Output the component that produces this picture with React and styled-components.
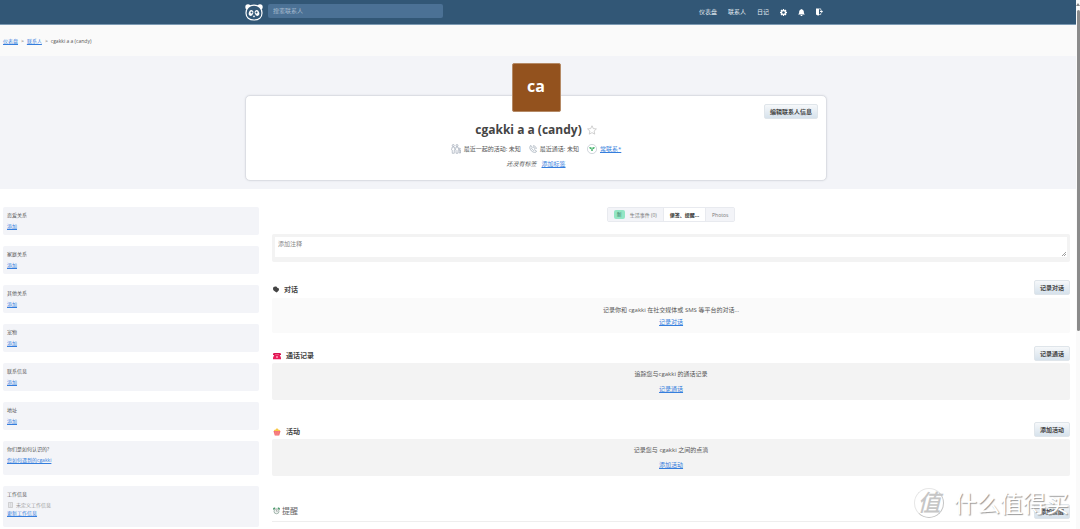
import React from "react";
import styled, { createGlobalStyle } from "styled-components";

const GlobalStyle = createGlobalStyle`
  *, *::before, *::after { box-sizing: border-box; }
  html, body { margin: 0; background: #fff; }
  body {
    color: #555;
    font: 6px/8px "Open Sans", "Noto Sans CJK SC", sans-serif;
    overflow: hidden;
  }
  h1, h2, h3, p, ul, ol { margin: 0; padding: 0; font-weight: 400; }
  ul, ol { list-style: none; }
  button, input, textarea { font-family: inherit; margin: 0; }
  svg { display: block; flex: none; }
`;

const Shell = styled.div`
  display: grid;
  grid-template-columns: minmax(0, 1fr) 4px;
  height: 100vh;
  overflow: hidden;
`;

const Page = styled.div`
  min-width: 0;
`;

const Scrollbar = styled.div`
  display: flex;
  flex-direction: column;
  align-items: flex-end;
  padding-top: 3px;
  background: #fafafa;
`;

const ScrollArrow = styled.span`
  border: 2px solid transparent;
  border-top: 0;
  border-bottom: 3px solid #858585;
  width: 3px;
  margin-bottom: 4px;
`;

const ScrollThumb = styled.span`
  width: 3px;
  height: 61%;
  border-radius: 2px;
  background: #8b8b8b;
`;

const Container = styled.div`
  max-width: 582px;
  margin: 0 auto;
`;

const TopBar = styled.header`
  height: 25px;
  padding: 0 7px 0 3px;
  background: #325776;
  border-bottom: 1px solid #7c9ab3;
`;

const TopBarRow = styled(Container)`
  display: flex;
  align-items: center;
  height: 24px;
`;

const LogoLink = styled.a`
  margin-right: 5px;
`;

const SearchInput = styled.input`
  width: 175px;
  height: 14px;
  margin-bottom: 2px;
  padding: 0 5px;
  border: 0;
  border-radius: 2px;
  background: #4b7195;
  color: #fff;
  font-size: 6px;
  &::placeholder { color: #a5bbce; opacity: 1; }
`;

const Nav = styled.nav`
  display: flex;
  align-items: center;
  gap: 11px;
  margin-left: auto;
  padding-right: 4px;
`;

const NavLink = styled.a`
  color: #e6edf3;
  text-decoration: none;
`;

const Crumbs = styled.nav`
  height: 31px;
  padding: 12px 3px 0;
  background: #fafafa;
  font-size: 5px;
  ol { display: flex; gap: 3px; }
`;

const Link = styled.a`
  color: #357edd;
  text-decoration: underline;
  font-size: ${(p) => (p.$small ? 5 : 6)}px;
`;

const Hero = styled.section`
  padding: 39px 7px 8px 3px;
  background: #f3f4f8;
`;

const ContactCard = styled(Container)`
  display: grid;
  grid-template-columns: 1fr auto 1fr;
  height: 86px;
  padding: 0 8px;
  background: #fff;
  border: 1px solid #dcdee4;
  border-radius: 5px;
  box-shadow: 0 0 2px #dcdee4;
`;

const Identity = styled.div`
  grid-column: 2;
  display: flex;
  flex-direction: column;
  align-items: center;
`;

const Avatar = styled.div`
  width: 49px;
  height: 49px;
  margin-top: -33px;
  border: 1px solid #b58a66;
  border-radius: 2px;
  background: #93521e;
  color: #fff;
  font-size: 16px;
  font-weight: 700;
  line-height: 45px;
  text-align: center;
`;

const Name = styled.h1`
  display: flex;
  align-items: center;
  gap: 5px;
  margin-top: 10px;
  color: #444;
  font-size: 12px;
  font-weight: 700;
  line-height: 16px;
`;

const StarButton = styled.button`
  padding: 0;
  border: 0;
  background: none;
`;

const Stats = styled.ul`
  display: flex;
  gap: 8px;
  margin-top: 6px;
  height: 10px;
  white-space: nowrap;
  li { display: flex; align-items: center; gap: 3px; }
`;

const Tags = styled.p`
  display: flex;
  gap: 5px;
  margin-top: 6px;
`;

const Button = styled.button`
  height: 15px;
  padding: 0 5px;
  border: 1px solid #dfe5ea;
  border-radius: 2px;
  background: linear-gradient(#f6f8fa, #d6e2ec);
  color: #444;
  font-size: 6px;
  font-weight: 700;
  line-height: 8px;
  white-space: nowrap;
`;

const EditButton = styled(Button)`
  justify-self: end;
  margin-top: 8px;
`;

const Columns = styled.div`
  display: grid;
  grid-template-columns: 24% minmax(0, 1fr);
  gap: 13px;
  padding: 18px 6px 0 3px;
`;

const Sidebar = styled.aside`
  display: flex;
  flex-direction: column;
  gap: 11px;
  font-size: 5px;
`;

const InfoCard = styled.section`
  padding: 4px 4px ${(p) => p.$bottom || 5}px;
  border-radius: 2px;
  background: #f3f4f8;
  display: flex;
  flex-direction: column;
  align-items: flex-start;
`;

const InfoTitle = styled.h3`
  margin-bottom: 3px;
  font-size: 5px;
`;

const Muted = styled.p`
  display: flex;
  align-items: center;
  gap: 3px;
  padding-left: 1px;
  color: #999;
`;

const Main = styled.main`
  min-width: 0;
`;

const Tabs = styled.div`
  display: flex;
  width: max-content;
  height: 15px;
  margin: 0 auto;
  border: 1px solid #e8eaef;
  border-radius: 2px;
`;

const Tab = styled.button`
  display: flex;
  align-items: center;
  gap: 5px;
  padding: 0 6px;
  border: 0;
  border-left: 1px solid #e8eaef;
  background: ${(p) => (p.$active ? "#fff" : "#f3f4f8")};
  color: ${(p) => (p.$active ? "#333" : "#777")};
  font-size: 5px;
  font-weight: ${(p) => (p.$active ? 700 : 400)};
  line-height: 8px;
  &:first-child { border-left: 0; }
`;

const Badge = styled.span`
  padding: 0 3px;
  border-radius: 2px;
  background: #93e6c4;
  color: #35765b;
  line-height: 9px;
`;

const NoteBox = styled.div`
  display: flex;
  height: 28px;
  margin-top: 12px;
  padding: 3px 3px 5px;
  border-radius: 2px;
  background: #f3f3f3;
`;

const NoteInput = styled.textarea`
  flex: 1;
  display: block;
  padding: 3px;
  border: 0;
  background: #fff;
  font-size: 6px;
  line-height: 8px;
  resize: none;
  &::placeholder { color: #888; opacity: 1; }
`;

const NoteGrip = styled.span`
  display: flex;
  align-items: flex-end;
  padding: 0 1px 1px 0;
  background: #fff;
`;

const Section = styled.section`
  margin-top: ${(p) => p.$space}px;
`;

const SectionHead = styled.div`
  display: flex;
  align-items: flex-end;
  justify-content: space-between;
  padding-bottom: ${(p) => p.$gap}px;
  border-bottom: ${(p) => (p.$ruled ? "1px solid #eee" : 0)};
`;

const SectionTitle = styled.h2`
  display: flex;
  align-items: center;
  gap: ${(p) => (p.$light ? 2 : 5)}px;
  padding-left: 1px;
  color: ${(p) => (p.$light ? "#666" : "#444")};
  font-size: ${(p) => (p.$light ? 8 : 7)}px;
  font-weight: ${(p) => (p.$light ? 400 : 700)};
  line-height: ${(p) => (p.$light ? 16 : 11)}px;
`;

const Panel = styled.div`
  display: flex;
  flex-direction: column;
  align-items: center;
  gap: ${(p) => (p.$pale ? 4 : 7)}px;
  padding: ${(p) => (p.$pale ? 8 : 7)}px 0 7px;
  border-radius: 2px;
  background: ${(p) => (p.$pale ? "#fafafa" : "#f3f3f3")};
`;

const Watermark = styled.div`
  position: absolute;
  right: 11px;
  bottom: 11px;
  display: flex;
  align-items: center;
  gap: 10px;
  color: #fff;
  font-size: 23px;
  line-height: 30px;
  text-shadow: 1px 1px 1px #999;
  pointer-events: none;
`;

const WatermarkSeal = styled.span`
  width: 30px;
  height: 30px;
  border: 1px solid #e6e6e6;
  border-right-color: #c4c4c4;
  border-bottom-color: #c4c4c4;
  border-radius: 50%;
  color: #c6c6c6;
  font-style: italic;
  font-weight: 500;
  line-height: 26px;
  text-align: center;
  text-shadow: none;
`;

const PandaLogo = () => (
  <svg width="18" height="17" viewBox="0 0 18 17" aria-label="Monica">
    <circle cx="3" cy="3" r="2.7" fill="#fff" />
    <circle cx="15" cy="3" r="2.7" fill="#fff" />
    <path d="M9 1.2C13.6 1.2 17 4.2 17 9.1c0 4.4-3.3 6.9-8 6.9s-8-2.500-8-6.9C1 4.200 4.400 1.200 9 1.200Z" fill="#325776" stroke="#fff" strokeWidth="1.2" />
    <ellipse cx="6" cy="9" rx="2.200" ry="2.900" fill="#fff" transform="rotate(20 6 9)" />
    <ellipse cx="12" cy="9" rx="2.200" ry="2.900" fill="#fff" transform="rotate(-20 12 9)" />
    <circle cx="6.500" cy="8.600" r="1" fill="#325776" />
    <circle cx="11.500" cy="8.600" r="1" fill="#325776" />
    <path d="M7.600 11.800h2.800L9 13.600Z" fill="#fff" />
  </svg>
);

const GearIcon = () => (
  <svg width="7" height="7" viewBox="0 0 14 14">
    <path d="M7 0v14M0 7h14M2 2l10 10M12 2 2 12" stroke="#fff" strokeWidth="2.600" />
    <circle cx="7" cy="7" r="5" fill="#fff" />
    <circle cx="7" cy="7" r="2.600" fill="#325776" />
  </svg>
);

const BellIcon = () => (
  <svg width="7" height="7" viewBox="0 0 14 14">
    <path d="M7 0c.8 0 1 .6 1 1.200 2.500.5 3.700 2.500 3.700 5 0 2.600.8 3.700 2.100 4.900H.2C1.500 9.900 2.300 8.800 2.300 6.200c0-2.500 1.200-4.500 3.700-5C6 .6 6.200 0 7 0ZM5 12h4c0 2.600-4 2.600-4 0Z" fill="#fff" />
  </svg>
);

const LogoutIcon = () => (
  <svg width="7" height="8" viewBox="0 0 14 16">
    <path d="M0 1h4.500L6 2v12l-1.500 1.500L0 13Z" fill="#fff" />
    <path d="M5 1.700h4.500V5M9.500 10v3H6" fill="none" stroke="#fff" strokeWidth="1.300" />
    <path d="M8 6.200h2.500V4L14 7.200l-3.500 3.200V8.200H8Z" fill="#fff" />
  </svg>
);

const StarIcon = () => (
  <svg width="10" height="10" viewBox="0 0 20 20">
    <path d="m10 1.500 2.600 5.700 6.200.7-4.600 4.200 1.300 6.200L10 15.200l-5.500 3.100 1.300-6.200L1.200 7.900l6.200-.7Z" fill="none" stroke="#c4c4c4" strokeWidth="1.600" />
  </svg>
);

const PeopleIcon = () => (
  <svg width="10" height="10" viewBox="0 0 20 20" fill="none" stroke="#93a0ae" strokeWidth="1.200">
    <circle cx="4.500" cy="3" r="2" />
    <path d="M2.500 6h4L8 11.500l-1.500 1v6h-4v-6L1 11.500Z" />
    <circle cx="12" cy="3" r="2" />
    <path d="M10 6h4l1.500 5.500-1.500 1v6h-4v-6l-1-1Z" />
    <circle cx="17.500" cy="9.500" r="1.200" />
    <path d="M16.500 12h2.500v6h-2.500Z" />
  </svg>
);

const CallIcon = () => (
  <svg width="8" height="8" viewBox="0 0 16 16" fill="none" stroke="#8795a5" strokeWidth="1.200">
    <path d="M2 2.500 4 1l2.500 3.500L5 6.200c.5 2 2.500 4 4.500 4.800l1.700-1.500L15 12l-1.500 2.500C7 16 0 9 2 2.500Z" />
    <path d="M8 1.500c4 0 6.500 2.500 6.500 6.500M8 4.200c2.300 0 3.800 1.500 3.800 3.800" />
  </svg>
);

const TouchIcon = () => (
  <svg width="10" height="10" viewBox="0 0 20 20">
    <circle cx="10" cy="10" r="9.200" fill="#fff" stroke="#b4bcc6" strokeWidth="1.200" />
    <path d="M4.500 6 8 6.500l2 1.500 2-1.500 3.500-.5-1 3.500-3 1V14H8.500v-3.500l-3-1Z" fill="#45b36b" />
    <circle cx="10" cy="9.500" r="1.200" fill="#fff" />
  </svg>
);

const JobIcon = () => (
  <svg width="5" height="6" viewBox="0 0 10 12" fill="none" stroke="#aaa">
    <path d="M1 1h8v10H1ZM3 3.500h4M3 6h4M3 8.500h4" />
  </svg>
);

const SpeechIcon = () => (
  <svg width="6" height="7" viewBox="0 0 12 14">
    <path d="M0 5.500C0 2.500 2 1 4.500 1 7 1 8 2 8.500 3.500 10.800 3.500 12 5 12 7.200c0 1.600-.8 2.600-2 3.200L7.500 13 5.500 12 2 9.500C.7 8.700 0 7.500 0 5.500Z" fill="#444" />
  </svg>
);

const PhoneIcon = () => (
  <svg width="8" height="8" viewBox="0 0 16 16">
    <path d="M0 6V4q0-2 3-2h10q3 0 3 2v2h-4V5H4v1Z" fill="#d8114f" />
    <path d="M3 5h10l3 6v3.500H0V11Z" fill="#e91e5b" />
    <circle cx="8" cy="10" r="2" fill="#ff9fb8" />
  </svg>
);

const PopcornIcon = () => (
  <svg width="8" height="8" viewBox="0 0 16 16">
    <path d="M2 7c-1-3 2-4 3-3 0-4 6-4 6 0 2-1 4 1 3 3Z" fill="#f9c846" />
    <path d="M1 6h14l-2.500 9h-9Z" fill="#f47174" />
    <path d="M5 7h1.500l.3 8H5.500ZM9.500 7H11l-.7 8H9Z" fill="#f99a9a" />
  </svg>
);

const ClockIcon = () => (
  <svg width="7" height="8" viewBox="0 0 14 16">
    <path d="M0 4c0-3 4-4 5-2L1.500 6ZM14 4c0-3-4-4-5-2l3.500 4Z" fill="#3f9563" />
    <circle cx="7" cy="8.500" r="5" fill="#eef2f0" stroke="#8aa095" strokeWidth="1.500" />
    <path d="M7 5v3.500h2.500" stroke="#777" fill="none" />
  </svg>
);

const GripIcon = () => (
  <svg width="4" height="4" viewBox="0 0 4 4" stroke="#777">
    <path d="M0 4 4 0M2 4l2-2" strokeWidth="0.700" />
  </svg>
);

const RELATIONS = ["恋爱关系", "家庭关系", "其他关系", "宠物", "联系信息", "地址"];

const ACTIVITY_SECTIONS = [
  { title: "对话", icon: <SpeechIcon />, action: "记录对话", text: "记录你和 cgakki 在社交媒体或 SMS 等平台的对话...", space: 18, gap: 3, pale: true },
  { title: "通话记录", icon: <PhoneIcon />, action: "记录通话", text: "追踪您与cgakki 的通话记录", space: 13, gap: 2 },
  { title: "活动", icon: <PopcornIcon />, action: "添加活动", text: "记录您与 cgakki 之间的点滴", space: 22, gap: 2 },
];

export default function App() {
  return (
    <Shell>
      <GlobalStyle />
      <Page>
        <TopBar>
          <TopBarRow>
            <LogoLink href="#"><PandaLogo /></LogoLink>
            <SearchInput type="search" placeholder="搜索联系人" aria-label="搜索联系人" />
            <Nav>
              <NavLink href="#">仪表盘</NavLink>
              <NavLink href="#">联系人</NavLink>
              <NavLink href="#">日记</NavLink>
              <NavLink href="#" aria-label="设置"><GearIcon /></NavLink>
              <NavLink href="#" aria-label="通知"><BellIcon /></NavLink>
              <NavLink href="#" aria-label="退出"><LogoutIcon /></NavLink>
            </Nav>
          </TopBarRow>
        </TopBar>
        <Crumbs>
          <ol>
            <li><Link $small href="#">仪表盘</Link></li>
            <li>&gt;</li>
            <li><Link $small href="#">联系人</Link></li>
            <li>&gt;</li>
            <li>cgakki a a (candy)</li>
          </ol>
        </Crumbs>
        <Hero>
          <ContactCard>
            <Identity>
              <Avatar>ca</Avatar>
              <Name>
                cgakki a a (candy)
                <StarButton aria-label="收藏"><StarIcon /></StarButton>
              </Name>
              <Stats>
                <li><PeopleIcon />最近一起的活动: 未知</li>
                <li><CallIcon />最近通话: 未知</li>
                <li><TouchIcon /><Link href="#">常联系*</Link></li>
              </Stats>
              <Tags><em>还没有标签</em><Link href="#">添加标签</Link></Tags>
            </Identity>
            <EditButton>编辑联系人信息</EditButton>
          </ContactCard>
        </Hero>
        <Columns>
          <Sidebar>
            {RELATIONS.map((title) => (
              <InfoCard key={title}>
                <InfoTitle>{title}</InfoTitle>
                <Link $small href="#">添加</Link>
              </InfoCard>
            ))}
            <InfoCard $bottom={11}>
              <InfoTitle>你们是如何认识的?</InfoTitle>
              <Link $small href="#">您如何遇到的cgakki</Link>
            </InfoCard>
            <InfoCard $bottom={10}>
              <InfoTitle>工作信息</InfoTitle>
              <Muted><JobIcon />未定义工作信息</Muted>
              <Link $small href="#">更新工作信息</Link>
            </InfoCard>
          </Sidebar>
          <Main>
            <Tabs role="tablist">
              <Tab role="tab"><Badge>新</Badge>生活事件 (0)</Tab>
              <Tab role="tab" $active aria-selected="true">便签、提醒...</Tab>
              <Tab role="tab">Photos</Tab>
            </Tabs>
            <NoteBox>
              <NoteInput placeholder="添加注释" aria-label="添加注释" />
              <NoteGrip><GripIcon /></NoteGrip>
            </NoteBox>
            {ACTIVITY_SECTIONS.map((s) => (
              <Section key={s.title} $space={s.space}>
                <SectionHead $gap={s.gap}>
                  <SectionTitle>{s.icon}{s.title}</SectionTitle>
                  <Button>{s.action}</Button>
                </SectionHead>
                <Panel $pale={s.pale}>
                  <p>{s.text}</p>
                  <Link href="#">{s.action}</Link>
                </Panel>
              </Section>
            ))}
            <Section $space={27}>
              <SectionHead $gap={2} $ruled>
                <SectionTitle $light><ClockIcon />提醒</SectionTitle>
                <Button>添加提醒</Button>
              </SectionHead>
            </Section>
          </Main>
        </Columns>
      </Page>
      <Scrollbar aria-hidden="true">
        <ScrollArrow />
        <ScrollThumb />
      </Scrollbar>
      <Watermark>
        <WatermarkSeal>值</WatermarkSeal>
        <span>什么值得买</span>
      </Watermark>
    </Shell>
  );
}
